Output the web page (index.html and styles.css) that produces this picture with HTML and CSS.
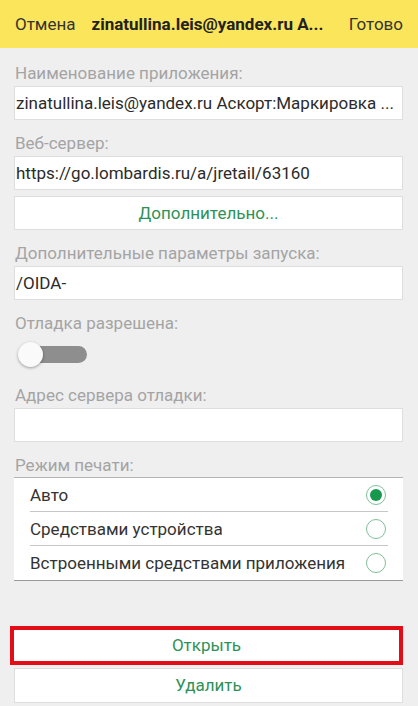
FILE: index.html
```html
<!DOCTYPE html>
<html lang="ru">
	<head>
		<meta charset="utf-8">
		<title>Параметры информационной базы</title>
		<link rel="stylesheet" href="styles.css">
	</head>
	<body>
		<header class="topbar">
			<span class="topbar-btn">Отмена</span>
			<span class="topbar-title">zinatullina.leis@yandex.ru А...</span>
			<span class="topbar-btn">Готово</span>
		</header>
		<main class="form">
			<div class="label">Наименование приложения:</div>
			<div class="field">zinatullina.leis@yandex.ru Аскорт:Маркировка ...</div>

			<div class="label">Веб-сервер:</div>
			<div class="field">https://go.lombardis.ru/a/jretail/63160</div>
			<div class="button more">Дополнительно...</div>

			<div class="label">Дополнительные параметры запуска:</div>
			<div class="field">/OIDA-</div>

			<div class="label">Отладка разрешена:</div>
			<div class="switch-row">
				<div class="switch">
					<div class="switch-thumb"></div>
				</div>
			</div>

			<div class="label">Адрес сервера отладки:</div>
			<div class="field"></div>

			<div class="label">Режим печати:</div>
			<div class="radio-list">
				<div class="radio-row">
					<span>Авто</span>
					<span class="radio checked"></span>
				</div>
				<div class="radio-row">
					<span>Средствами устройства</span>
					<span class="radio"></span>
				</div>
				<div class="radio-row">
					<span>Встроенными средствами приложения</span>
					<span class="radio"></span>
				</div>
			</div>

			<div class="actions">
				<div class="highlight">
					<div class="button open">Открыть</div>
				</div>
				<div class="button delete">Удалить</div>
			</div>
		</main>
	</body>
</html>
```

FILE: styles.css
```css
html, body {
	margin: 0;
	padding: 0;
}

body {
	width: 418px;
	height: 706px;
	overflow: hidden;
	background-color: #efefef;
	font-family: Roboto, "Noto Sans", sans-serif;
	font-size: 17px;
	color: #2b2b2b;
}

.topbar {
	height: 48px;
	background-color: #fbe55b;
	display: flex;
	align-items: center;
	padding: 0 15px;
	box-sizing: border-box;
	gap: 16px;
	color: #333;
}

.topbar-btn {
	flex: none;
}

.topbar-title {
	flex: 1;
	font-weight: bold;
	color: #222;
	white-space: nowrap;
	overflow: hidden;
}

.form {
	padding: 2px 15px 0 14px;
}

.label {
	padding: 13px 1px 3px;
	line-height: 20px;
	color: #a4a4a4;
}

.field {
	height: 34px;
	box-sizing: border-box;
	background-color: #fff;
	border: 1px solid #dedede;
	padding: 0 1px;
	line-height: 32px;
	white-space: nowrap;
	overflow: hidden;
}

.button {
	height: 34px;
	box-sizing: border-box;
	background-color: #fff;
	border: 1px solid #dedede;
	line-height: 32px;
	text-align: center;
	color: #2e9258;
}

.more {
	margin-top: 6px;
}

.switch-row {
	height: 36px;
	display: flex;
	align-items: center;
	padding-left: 5px;
}

.switch {
	width: 68px;
	height: 17px;
	border-radius: 9px;
	background-color: #8e8e8e;
	display: flex;
	align-items: center;
}

.switch-thumb {
	width: 25px;
	height: 25px;
	border-radius: 50%;
	background-color: #fafafa;
	margin-left: -1px;
	box-shadow: 0 1px 3px rgba(0, 0, 0, 0.35);
}

.radio-list {
	margin-top: -1px;
	background-color: #fff;
	border-top: 1px solid #b4b4b4;
	border-bottom: 1px solid #9a9a9a;
}

.radio-row {
	height: 34px;
	box-sizing: border-box;
	margin: 0 15px 0 16px;
	display: flex;
	align-items: center;
	justify-content: space-between;
	border-bottom: 1px solid #c6c6c6;
	color: #333;
}

.radio-row:last-child {
	border-bottom: none;
}

.radio {
	width: 20px;
	height: 20px;
	box-sizing: border-box;
	border-radius: 50%;
	border: 1px solid #7fbf98;
	margin-right: 2px;
	display: flex;
	align-items: center;
	justify-content: center;
}

.radio.checked::after {
	content: "";
	width: 12px;
	height: 12px;
	border-radius: 50%;
	background-color: #16994d;
}

.actions {
	margin-top: 45px;
}

.highlight {
	border: 4px solid #e30d17;
	margin: 0 0 0 -4px;
}

.open {
	height: 31px;
	line-height: 31px;
	border: none;
}

.delete {
	margin-top: 3px;
	height: 35px;
}
```
